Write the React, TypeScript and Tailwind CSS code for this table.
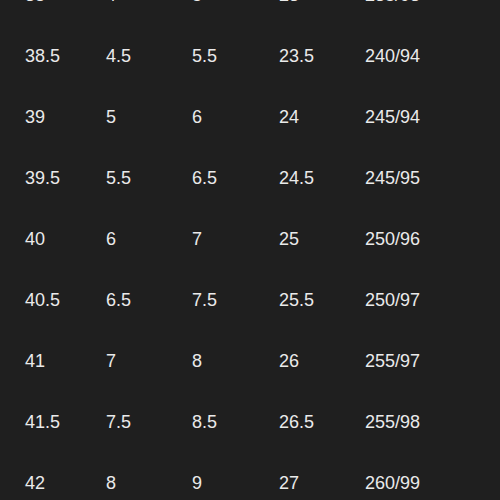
const rows = [
  ['38', '4', '5', '23', '235/93'],
  ['38.5', '4.5', '5.5', '23.5', '240/94'],
  ['39', '5', '6', '24', '245/94'],
  ['39.5', '5.5', '6.5', '24.5', '245/95'],
  ['40', '6', '7', '25', '250/96'],
  ['40.5', '6.5', '7.5', '25.5', '250/97'],
  ['41', '7', '8', '26', '255/97'],
  ['41.5', '7.5', '8.5', '26.5', '255/98'],
  ['42', '8', '9', '27', '260/99'],
];

export default function App() {
  return (
    <div className="w-[500px] h-[500px] overflow-hidden bg-[#1f1f1f] text-[#eaeaea] font-['Liberation_Sans',Arial,sans-serif]">
      <div className="-mt-[36px] pl-[25px]">
        {rows.map((r, i) => (
          <div key={i} className="grid grid-cols-[81px_86px_87px_86px_1fr] h-[61px] items-center text-[18px] leading-none">
            {r.map((c, j) => (
              <span key={j}>{c}</span>
            ))}
          </div>
        ))}
      </div>
    </div>
  );
}
